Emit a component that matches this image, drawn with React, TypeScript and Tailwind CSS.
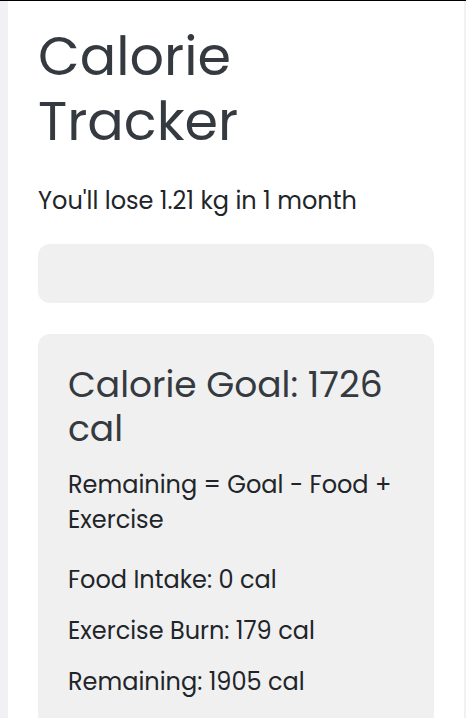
import React from "react";

export default function App() {
  return (
    <div className="min-h-screen bg-[#f1f1f3] border-t border-black font-['Poppins','Open_Sans',sans-serif]">
      <div className="ml-2 w-[456px] min-h-[717px] bg-white px-[30px] pt-[23px]">
        <h1 className="max-w-[330px] text-[54px] leading-[65px] font-normal text-[#343a40]">
          Calorie Tracker
        </h1>
        <p className="mt-[31px] text-[24px] leading-[32px] text-[#212529]">
          You'll lose 1.21 kg in 1 month
        </p>
        <div className="mt-[27px] h-[59px] rounded-[12px] bg-[#f0f0f0]" />
        <div className="mt-[31px] rounded-t-[12px] bg-[#f0f0f0] px-[30px] pt-[29px] pb-[30px]">
          <h2 className="max-w-[330px] text-[36px] leading-[44px] font-normal text-[#343a40]">
            Calorie Goal: 1726 cal
          </h2>
          <p className="mt-[16px] max-w-[336px] text-[24px] leading-[35px] text-[#212529]">
            Remaining = Goal - Food + Exercise
          </p>
          <p className="mt-[25px] text-[24px] leading-[35px] text-[#212529]">Food Intake: 0 cal</p>
          <p className="mt-[16px] text-[24px] leading-[35px] text-[#212529]">Exercise Burn: 179 cal</p>
          <p className="mt-[16px] text-[24px] leading-[35px] text-[#212529]">Remaining: 1905 cal</p>
        </div>
      </div>
    </div>
  );
}
